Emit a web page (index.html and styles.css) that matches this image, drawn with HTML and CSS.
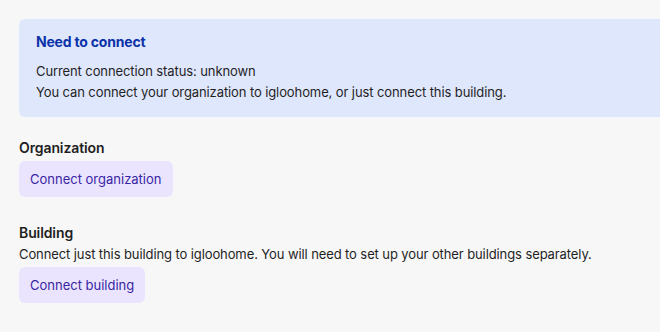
FILE: index.html
```html
<!DOCTYPE html>
<html lang="en">

<head>
  <meta charset="UTF-8">
  <meta name="viewport" content="width=device-width, initial-scale=1.0">
  <title>Connect</title>
  <link rel="stylesheet" href="styles.css">
</head>

<body>
  <div class="page">
    <div class="callout">
      <div class="callout-title">Need to connect</div>
      <p>Current connection status: unknown</p>
      <p>You can connect your organization to igloohome, or just connect this building.</p>
    </div>

    <div class="section">
      <h3>Organization</h3>
      <button class="btn">Connect organization</button>
    </div>

    <div class="section">
      <h3>Building</h3>
      <p>Connect just this building to igloohome. You will need to set up your other buildings separately.</p>
      <button class="btn">Connect building</button>
    </div>
  </div>
</body>

</html>
```

FILE: styles.css
```css
body {
  margin: 0;
  background-color: #f7f7f7;
  font-family: Inter, "Liberation Sans", sans-serif;
  font-size: 13px;
  line-height: 20px;
  letter-spacing: -0.1px;
  color: #1f1f1f;
}

p {
  margin: 0;
}

.page {
  padding: 19px 0 0 19px;
}

/* 提示框 */
.callout {
  margin-right: -10px;
  padding: 13px 17px 14px;
  border-radius: 6px;
  background-color: #dfe7fd;
}

.callout p {
  line-height: 21px;
}

.callout-title {
  margin-bottom: 9px;
  font-size: 14px;
  font-weight: 700;
  letter-spacing: -0.2px;
  color: #0b32a8;
}

.section {
  margin-top: 21px;
}

.section + .section {
  margin-top: 26px;
}

.section h3 {
  margin: 0 0 1px;
  font-size: 14px;
  line-height: 20px;
  font-weight: 600;
}

.section p {
  margin-bottom: 3px;
}

.btn {
  display: block;
  height: 36px;
  margin-top: 3px;
  padding: 0 11px;
  border: 0;
  border-radius: 6px;
  background-color: #ebe4fe;
  color: #3826a4;
  font-family: inherit;
  font-size: 13px;
  letter-spacing: 0;
}
```
